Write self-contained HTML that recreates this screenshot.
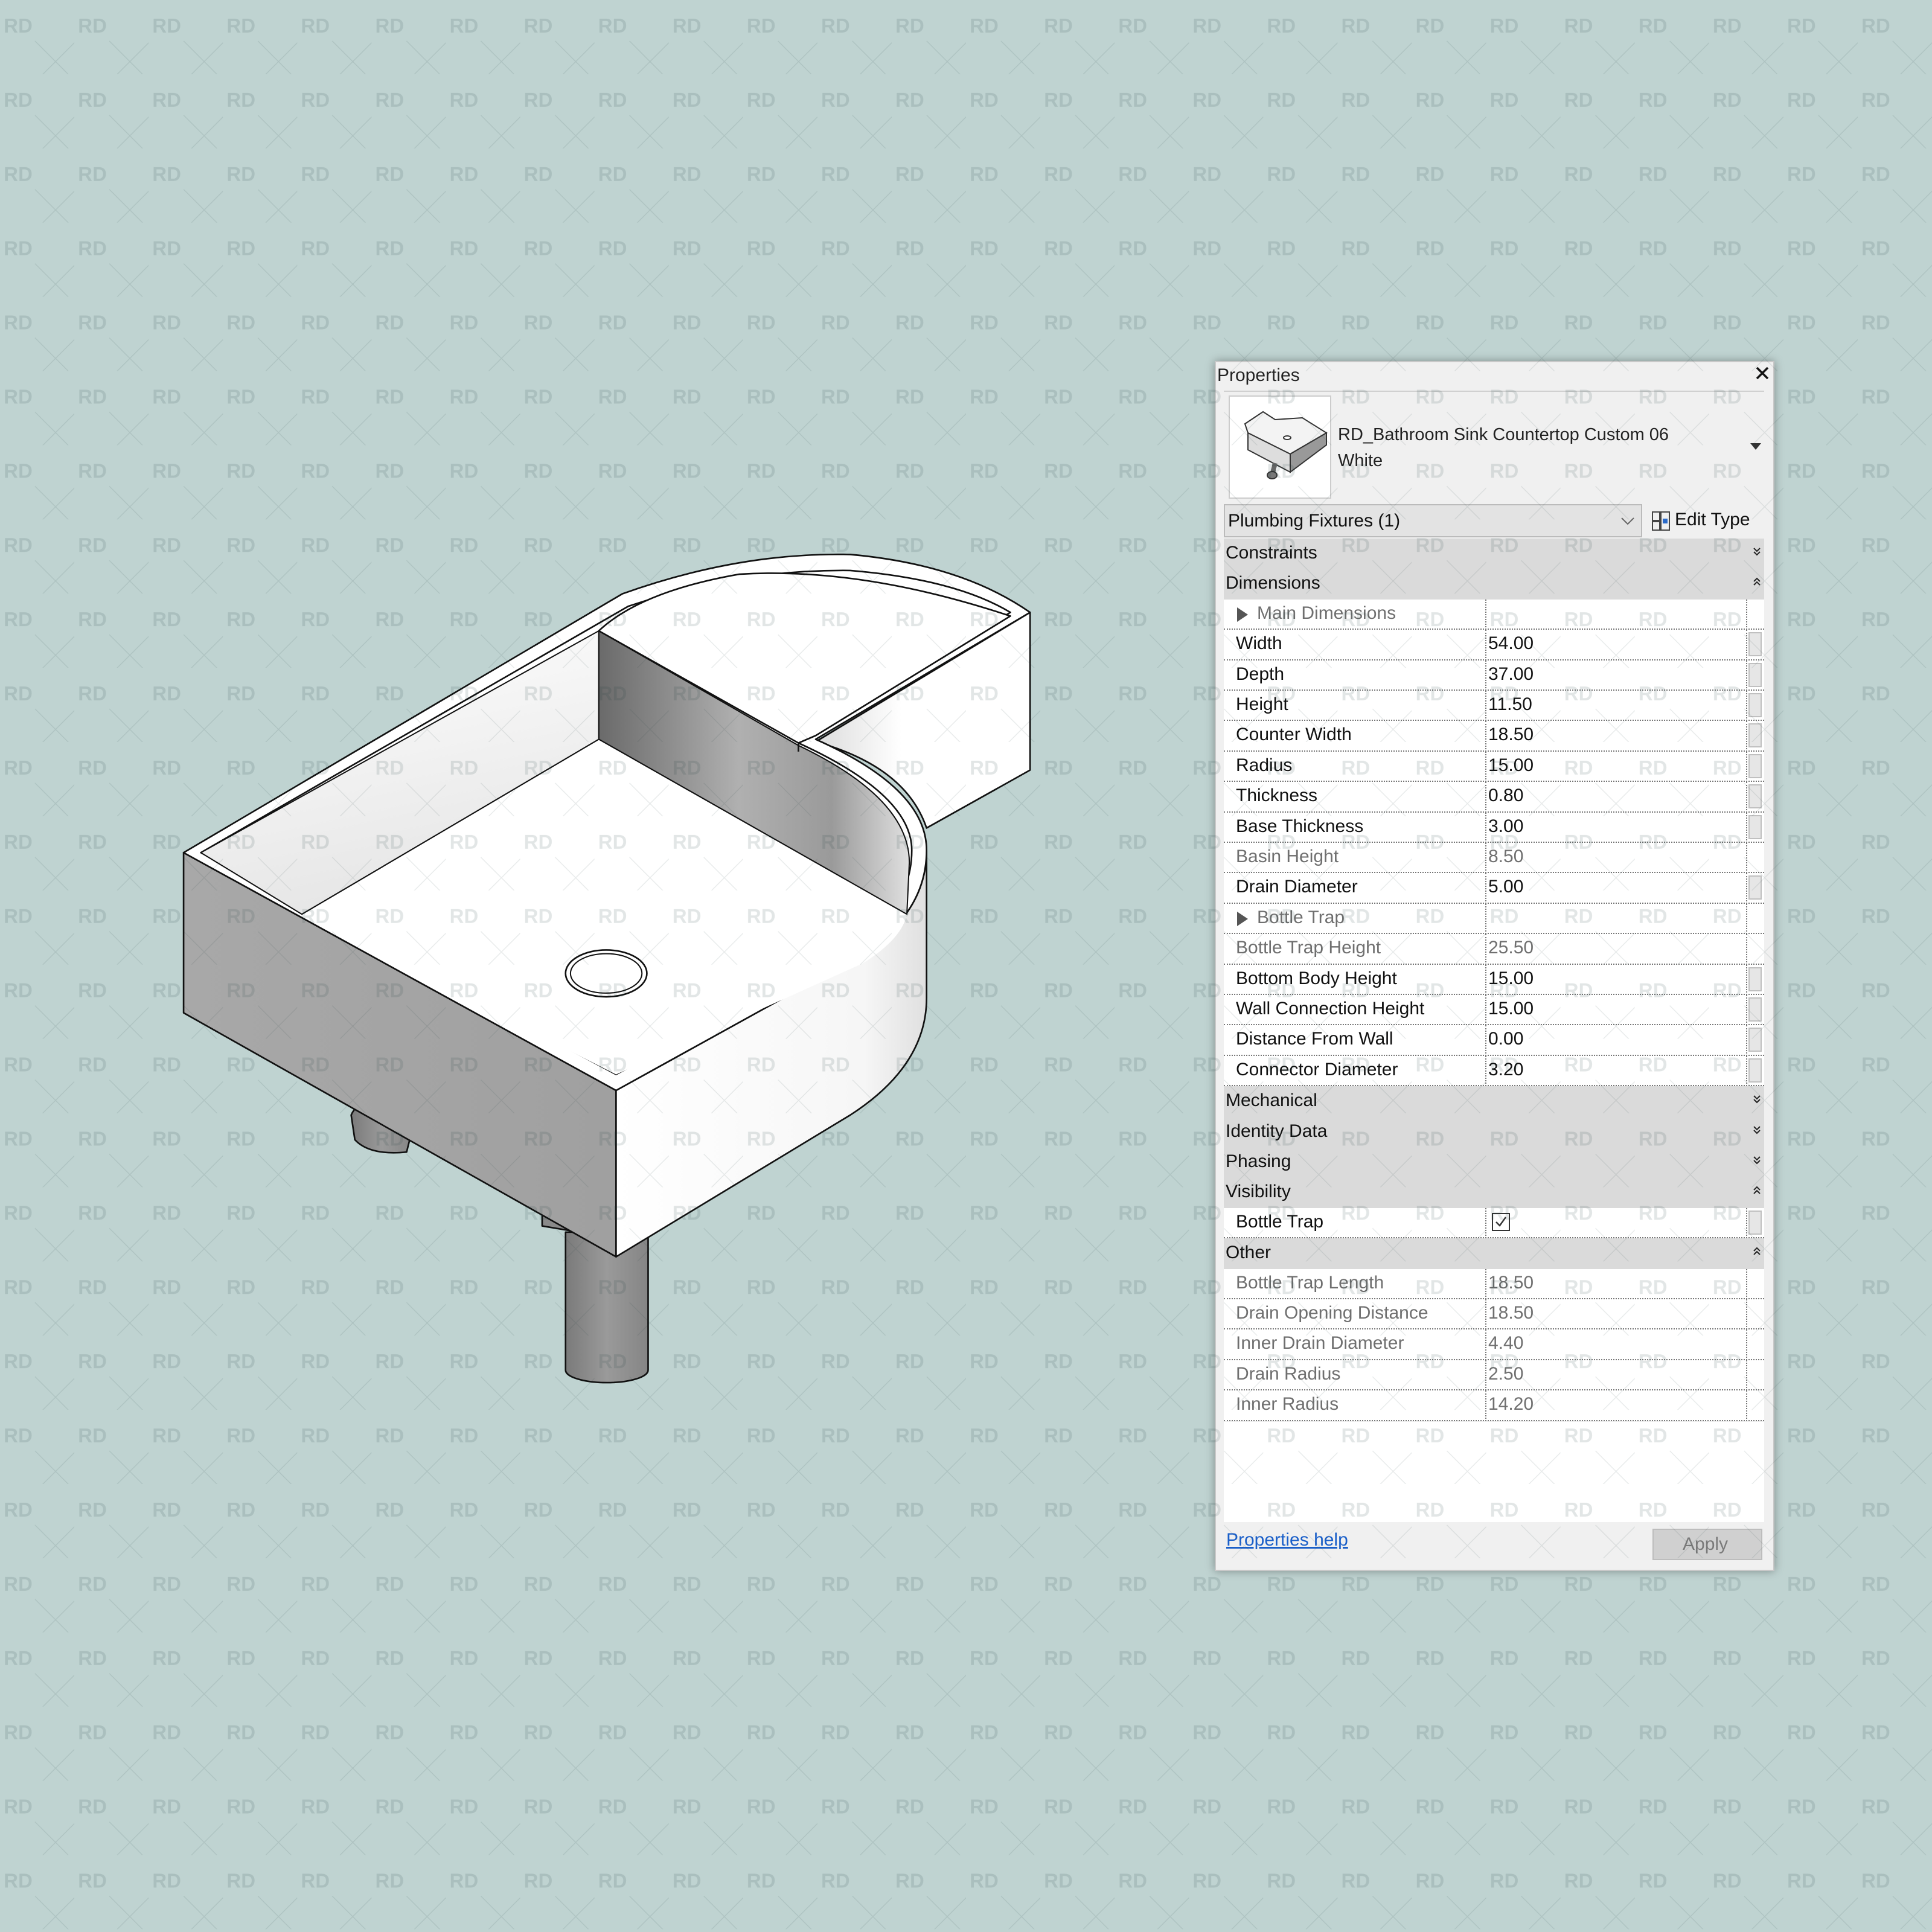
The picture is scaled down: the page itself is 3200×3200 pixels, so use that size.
<!DOCTYPE html>
<html><head><meta charset="utf-8"><style>
html,body{margin:0;padding:0}
body{width:3200px;height:3200px;position:relative;overflow:hidden;background:#bfd3d1;font-family:"Liberation Sans",sans-serif}
.abs{position:absolute}
#panel{position:absolute;left:2012px;top:598px;width:927px;height:2004px;background:#f0f0f0;border:2px solid #c8c8c8;box-shadow:0 0 14px rgba(0,0,0,.35);box-sizing:border-box}
.t{position:absolute;font-size:30px;line-height:50px;white-space:nowrap;color:#111}
.row{position:absolute;left:13px;width:895px;height:50.4px;box-sizing:border-box}
.hd{background:#dadada}
.pr{background:#fff;border-bottom:2px dotted #777}
.pr .sep{position:absolute;left:433px;top:0;bottom:-2px;border-left:2px dotted #777}
.pr .sep2{position:absolute;left:865px;top:0;bottom:-2px;border-left:2px dotted #777}
.sb{position:absolute;left:869px;top:4px;width:22px;height:40px;background:#e6e6e6;border:2px solid #c0c0c0;box-sizing:border-box}
.g{color:#6f6f6f}
</style></head><body>

<svg class="abs" style="left:0;top:0" width="3200" height="3200" viewBox="0 0 1568 1568">
<defs>
<linearGradient id="lf" x1="0" y1="0" x2="1" y2="0"><stop offset="0" stop-color="#a8a8a8"/><stop offset="1" stop-color="#a0a0a0"/></linearGradient>
<linearGradient id="dw" x1="0" y1="0" x2="1" y2="0"><stop offset="0" stop-color="#6a6a6a"/><stop offset=".45" stop-color="#b0b0b0"/><stop offset=".75" stop-color="#9a9a9a"/><stop offset="1" stop-color="#e0e0e0"/></linearGradient>
<linearGradient id="lw" x1="0" y1="0" x2="0.3" y2="1"><stop offset="0" stop-color="#ffffff"/><stop offset="1" stop-color="#e6e6e6"/></linearGradient>
<linearGradient id="pp" x1="0" y1="0" x2="1" y2="0"><stop offset="0" stop-color="#7a7a7a"/><stop offset=".5" stop-color="#9a9a9a"/><stop offset="1" stop-color="#858585"/></linearGradient>
<linearGradient id="fr" x1="0" y1="0" x2="1" y2="0"><stop offset="0" stop-color="#ffffff"/><stop offset=".8" stop-color="#f6f6f6"/><stop offset="1" stop-color="#e0e0e0"/></linearGradient>
<linearGradient id="rb" x1="0" y1="0" x2="1" y2="0"><stop offset="0" stop-color="#dcdcdc"/><stop offset=".4" stop-color="#ffffff"/><stop offset="1" stop-color="#ffffff"/></linearGradient>
</defs>
<g stroke="#111" stroke-width="1.3" stroke-linejoin="round">
<path d="M285,905 Q290,893 305,897 L335,915 L330,935 Q300,938 288,925 Z" fill="url(#pp)"/>
<path d="M440,985 L470,985 L470,1000 L440,995 Z" fill="#8a8a8a"/>
<path d="M459,1000 L459,1112 A33,10 0 0 0 526,1112 L526,1000 Z" fill="url(#pp)"/>
<!-- right box side -->
<path d="M662,602 L836,497 L836,625 L752,672 Q735,622 662,602 Z" fill="url(#rb)"/>
<!-- left face -->
<path d="M149,692 L500,885 L500,1020 L149,822 Z" fill="url(#lf)"/>
<!-- front curved face -->
<path d="M500,885 L690,780 Q752,745 752,690 L752,810 Q752,865 690,905 L500,1020 Z" fill="url(#fr)"/>
<!-- top rim outer -->
<path d="M149,692 L505,482 Q600,448 690,450 Q780,458 836,497 L662,600 Q752,640 752,690 Q752,745 690,780 L500,885 Z" fill="#fff"/>
<!-- inner cavity -->
<path d="M163,692 L510,492 Q600,462 690,463 Q775,470 820,497 L648,603 Q740,645 740,690 Q740,740 685,772 L500,872 Z" fill="#fff"/>
<!-- left inner wall -->
<path d="M163,692 L486,512 L486,600 L245,742 Z" fill="url(#lw)" stroke-width="1"/>
<!-- dark wall -->
<path d="M486,512 L648,605 Q738,648 738,700 L736,742 L486,600 Z" fill="url(#dw)" stroke-width="1"/>
<!-- floor -->
<path d="M245,742 L486,600 L736,742 Q732,762 700,782 L500,872 Z" fill="#fff" stroke="none"/>
<path d="M245,742 L486,600 L736,742" fill="none" stroke-width="1"/>
<!-- shelf top -->
<path d="M486,512 Q520,480 600,466 Q700,460 820,500 L662,597 L648,603 Z" fill="#fff"/>
<path d="M648,603 L648,610" fill="none"/>
<ellipse cx="492" cy="790" rx="33" ry="19" fill="#fff"/>
<ellipse cx="492" cy="790" rx="29" ry="16" fill="#fff" stroke-width="1"/>
</g>
</svg>

<div id="panel">
  <div class="t" style="left:2px;top:-3px;color:#222">Properties</div>
  <svg class="abs" style="left:893px;top:6px" width="24" height="24"><path d="M3,3L21,21M21,3L3,21" stroke="#111" stroke-width="3.5"/></svg>
  <div class="abs" style="left:13px;top:47px;width:895px;border-top:2px solid #d0d0d0"></div>
  <div class="abs" style="left:21px;top:55px;width:170px;height:171px;background:#fff;border:2px solid #ccc;box-sizing:border-box">
    <svg width="166" height="167" viewBox="0 0 166 167"><g stroke="#333" stroke-width="2" fill="#fff"><path d="M25,45 L55,25 L75,38 L120,35 L160,60 L100,95 L30,60 Z" fill="#f3f3f3"/><path d="M30,60 L100,95 L100,125 L30,88 Z" fill="#ddd"/><path d="M100,95 L160,60 L160,80 L100,125Z" fill="#999"/><ellipse cx="95" cy="68" rx="6" ry="3"/><path d="M75,110 L70,130" stroke="#666" stroke-width="8"/><ellipse cx="70" cy="130" rx="8" ry="6" fill="#777"/></g></svg>
  </div>
  <div class="t" style="left:202px;top:95px;font-size:29px;color:#222">RD_Bathroom Sink Countertop Custom 06</div>
  <div class="t" style="left:202px;top:138px;font-size:29px;color:#222">White</div>
  <svg class="abs" style="left:884px;top:133px" width="20" height="14"><path d="M1,1L19,1L10,12Z" fill="#333"/></svg>
  <div class="abs" style="left:13px;top:235px;width:693px;height:55px;background:#e3e3e3;border:2px solid #bbb;box-sizing:border-box"></div>
  <div class="t" style="left:20px;top:238px;font-size:30px;color:#111">Plumbing Fixtures (1)</div>
  <svg class="abs" style="left:670px;top:255px" width="24" height="16"><path d="M2,3L12,13L22,3" stroke="#666" stroke-width="2" fill="none"/></svg>
  <svg class="abs" style="left:720px;top:245px" width="36" height="36"><g fill="none" stroke="#444" stroke-width="2"><rect x="3" y="3" width="12" height="14"/><rect x="3" y="19" width="12" height="14"/><rect x="17" y="3" width="14" height="30"/><rect x="20" y="14" width="8" height="8" fill="#2a6ac9" stroke="none"/></g></svg>
  <div class="t" style="left:760px;top:236px;font-size:30px;color:#111">Edit Type</div>

  <div id="grid" class="abs" style="left:0;top:292px;width:927px;height:1470px"></div>

  <div class="abs" style="left:13px;top:1755px;width:895px;height:166px;background:#fff"></div>
  <div class="t" style="left:17px;top:1926px;font-size:30px;color:#1a5fc9;text-decoration:underline">Properties help</div>
  <div class="abs" style="left:723px;top:1932px;width:182px;height:52px;background:#d0d0d0;border:2px solid #bdbdbd;box-sizing:border-box"></div>
  <div class="t" style="left:773px;top:1933px;font-size:30px;color:#7a7a7a">Apply</div>
</div>

<script>
var rows=[["h","Constraints","d"],["h","Dimensions","u"],["grp","Main Dimensions"],["p","Width","54.00"],["p","Depth","37.00"],["p","Height","11.50"],["p","Counter Width","18.50"],["p","Radius","15.00"],["p","Thickness","0.80"],["p","Base Thickness","3.00"],["g","Basin Height","8.50"],["p","Drain Diameter","5.00"],["grp","Bottle Trap"],["g","Bottle Trap Height","25.50"],["p","Bottom Body Height","15.00"],["p","Wall Connection Height","15.00"],["p","Distance From Wall","0.00"],["p","Connector Diameter","3.20"],["h","Mechanical","d"],["h","Identity Data","d"],["h","Phasing","d"],["h","Visibility","u"],["c","Bottle Trap",""],["h","Other","u"],["g","Bottle Trap Length","18.50"],["g","Drain Opening Distance","18.50"],["g","Inner Drain Diameter","4.40"],["g","Drain Radius","2.50"],["g","Inner Radius","14.20"]];
var h="";
rows.forEach(function(r,i){
 var top=(i*50.4).toFixed(1);
 if(r[0]=="h"){
  var chev=r[2]=="d"?"M2,2L7,7L12,2M2,8L7,13L12,8":"M2,7L7,2L12,7M2,13L7,8L12,13";
  h+='<div class="row hd" style="top:'+top+'px"><div class="t" style="left:3px;top:-1px">'+r[1]+'</div><svg class="abs" style="left:876px;top:14px" width="14" height="16"><path d="'+chev+'" stroke="#222" stroke-width="2" fill="none"/></svg></div>';
 } else {
  var cls=(r[0]=="g"||r[0]=="grp")?"g":"";
  var lab=r[0]=="grp"?'<svg class="abs" style="left:20px;top:12px" width="22" height="26"><path d="M2,1L20,13L2,25Z" fill="#555"/></svg><div class="t g" style="left:55px;top:-2px">'+r[1]+'</div>':'<div class="t '+cls+'" style="left:20px;top:-2px">'+r[1]+'</div>';
  var val="";
  if(r[0]=="c") val='<div class="abs" style="left:444px;top:8px;width:30px;height:30px;border:2px solid #333;box-sizing:border-box;background:#fff"><svg width="26" height="26"><path d="M5,13L11,19L21,5" stroke="#333" stroke-width="2.5" fill="none"/></svg></div>';
  else if(r[2]) val='<div class="t '+cls+'" style="left:438px;top:-2px">'+r[2]+'</div>';
  var sb=(r[0]=="p"||r[0]=="c")?'<div class="sb"></div>':'';
  h+='<div class="row pr" style="top:'+top+'px">'+lab+'<div class="sep"></div><div class="sep2"></div>'+val+sb+'</div>';
 }
});
document.getElementById("grid").innerHTML=h;
</script>

<svg class="abs" style="left:0;top:0;pointer-events:none" width="3200" height="3200">
<defs><pattern id="wm" x="0" y="0" width="123.077" height="122.9" patternUnits="userSpaceOnUse">
<text x="30" y="54" font-family="Liberation Sans" font-weight="bold" font-size="33" text-anchor="middle" fill="rgba(20,50,50,0.12)">RD</text>
<path d="M58,68L126,136M126,68L58,136" stroke="rgba(20,50,50,0.10)" stroke-width="1.4"/>
</pattern></defs>
<rect width="3200" height="3200" fill="url(#wm)"/>
</svg>
</body></html>
